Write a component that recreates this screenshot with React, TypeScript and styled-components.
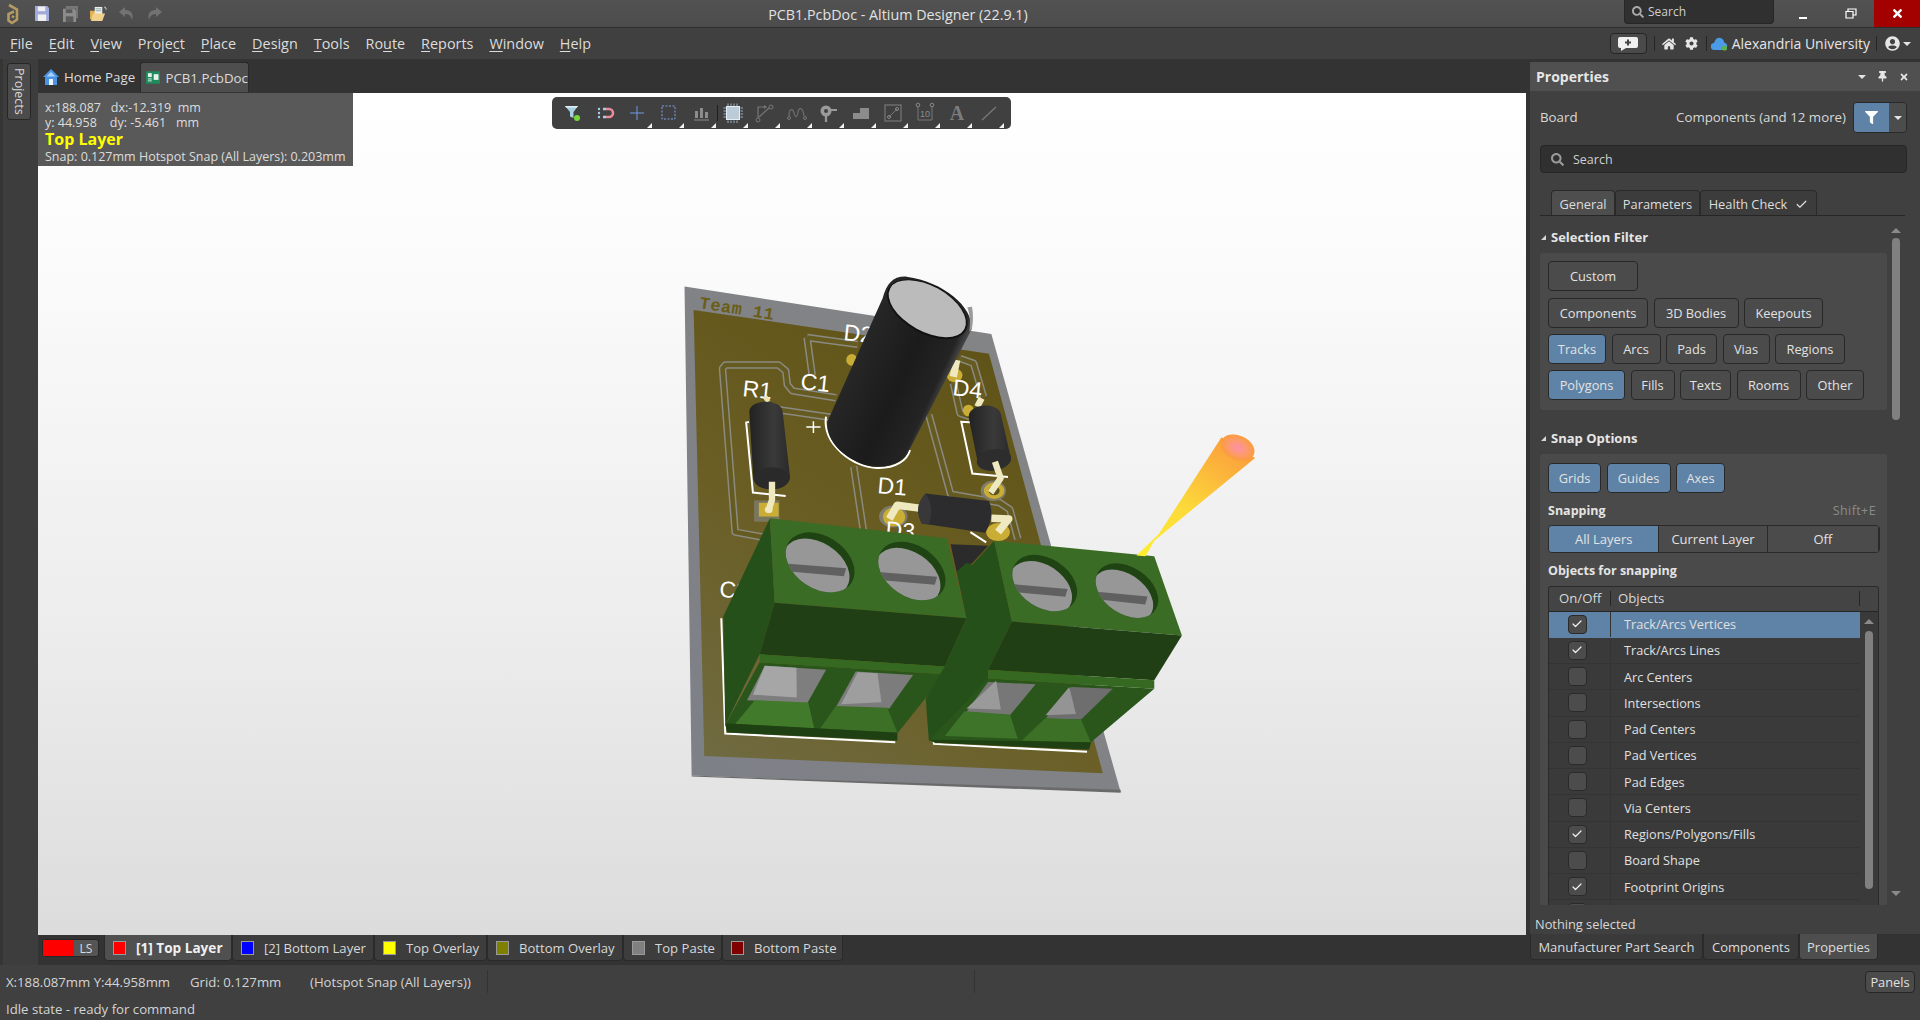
import React from "react";
import styled, { createGlobalStyle } from "styled-components";
import { FaCog, FaFilter, FaHome, FaSearch, FaThumbtack, FaTimes, FaUserCircle } from "react-icons/fa";
import { Check } from "lucide-react";

const Global = createGlobalStyle`
  html, body { margin: 0; padding: 0; background: #404040; overflow: hidden; }
  body { font-family: "Open Sans", "Noto Sans", "Liberation Sans", sans-serif; font-size: 12px; color: #d9d9d9; }
  * { box-sizing: border-box; }
`;

const Shell = styled.div`
  width: 1920px; height: 1020px; display: flex; flex-direction: column; overflow: hidden; background: #404040;
`;

/* ---------- title bar ---------- */
const TitleBar = styled.header`
  height: 28px; flex: none; display: flex; align-items: flex-start;
  background: linear-gradient(#525252, #4c4c4c); border-bottom: 1px solid #2e2e2e;
`;
const QuickTools = styled.div`
  width: 768px; height: 27px; flex: none; display: flex; align-items: center; padding-left: 6px;
`;
const LogoSlot = styled.span`
  width: 22px; display: flex; margin-right: 0;
`;
const QuickIcon = styled.span<{ $dim?: boolean }>`
  width: 28px; height: 20px; display: flex; align-items: center; justify-content: center; opacity: ${p => (p.$dim ? 0.75 : 1)};
`;
const WindowTitle = styled.div`
  width: 260px; height: 28px; line-height: 29px; font-size: 14.3px; text-align: center; color: #e2e2e2; white-space: nowrap;
`;
const TitleSearch = styled.div`
  width: 150px; height: 24px; margin-left: 596px; display: flex; align-items: center; gap: 4px; padding-left: 7px;
  background: #303030; border: 1px solid #262626; border-top: 0; border-radius: 0 0 4px 4px; color: #cfcfcf; font-size: 12px;
`;
const WinButton = styled.div<{ $close?: boolean; $w: number }>`
  width: ${p => p.$w}px; height: 27px; display: flex; align-items: center; justify-content: center;
  background: ${p => (p.$close ? "#a30000" : "transparent")}; color: #fff; flex: none;
`;
const WinSpacer = styled.div`
  width: 0; flex: 1;
`;

/* ---------- menu bar ---------- */
const MenuBar = styled.nav`
  height: 31px; flex: none; display: flex; align-items: center; background: #404040; padding-left: 10px; gap: 16px; font-size: 14.4px; color: #dcdcdc;
`;
const MenuItem = styled.span`
  white-space: nowrap; u { text-underline-offset: 2px; }
`;
const MenuRight = styled.div`
  margin-left: auto; display: flex; align-items: center; height: 100%; color: #e6e6e6;
`;
const ChatButton = styled.div`
  width: 37px; height: 21px; display: flex; align-items: center; justify-content: center; background: #4a4a4a; border: 1px solid #252525; border-radius: 4px;
`;
const MenuSep = styled.span<{ $ml: number; $mr: number }>`
  width: 1px; height: 15px; background: #262626; margin: 0 ${p => p.$mr}px 0 ${p => p.$ml}px;
`;
const MenuGap = styled.span<{ $w: number }>`
  width: ${p => p.$w}px; flex: none;
`;
const AccountName = styled.span`
  font-size: 14px; margin-left: 4px; white-space: nowrap;
`;
const Caret = styled.span`
  width: 0; height: 0; border-left: 4px solid transparent; border-right: 4px solid transparent; border-top: 4px solid #e4e4e4;
`;

/* ---------- main ---------- */
const Main = styled.div`
  flex: 1; display: flex; min-height: 0; background: #2f2f2f;
`;
const LeftStrip = styled.aside`
  width: 38px; flex: none; background: #3d3d3d; padding: 4px 0 0 7px; box-shadow: inset 3px 0 0 #353535;
`;
const ProjectsTab = styled.div`
  width: 24px; height: 57px; display: flex; align-items: center; justify-content: center; background: #4b4b4b; border: 1px solid #262626; border-radius: 3px;
  writing-mode: vertical-rl; font-size: 12.5px; color: #dadada;
`;
const Center = styled.section`
  width: 1488px; flex: none; display: flex; flex-direction: column;
`;
const DocTabs = styled.div`
  height: 34px; flex: none; background: #333; display: flex; align-items: flex-end; padding: 3px 0 1px 5px;
`;
const DocTab = styled.div<{ $active?: boolean; $w: number; $pl: number }>`
  width: ${p => p.$w}px; height: 30px; display: flex; align-items: center; gap: 5px; padding-left: ${p => p.$pl}px; font-size: 13.3px; color: #dcdcdc; white-space: nowrap;
  background: ${p => (p.$active ? "#4e4e4e" : "transparent")}; border-radius: 3px 3px 0 0;
  border: ${p => (p.$active ? "1px solid #2a2a2a" : "0")}; border-bottom: 0;
`;
const Canvas = styled.div`
  position: relative; height: 842px; flex: none; background: linear-gradient(#ffffff 0%, #fbfbfb 20%, #ececec 65%, #dcdcdc 100%); overflow: hidden;
`;
const CanvasDrawing = styled.svg`
  display: block; width: 100%; height: 100%;
`;
const Readout = styled.div`
  position: absolute; left: 0; top: 0; width: 315px; height: 73px; background: #595959; padding: 7px 0 0 7px; font-size: 12.5px; line-height: 15px; color: #dddddd; white-space: pre;
`;
const ReadoutLayer = styled.div`
  font-weight: 700; font-size: 16px; line-height: 19px; color: #ffff00;
`;
const FloatBar = styled.div`
  position: absolute; left: 514px; top: 4px; width: 459px; height: 32px; background: #404040; border-radius: 5px; display: flex; align-items: center; padding-left: 5px;
`;
const FloatTool = styled.div<{ $more?: boolean }>`
  position: relative; width: 32px; height: 32px; display: flex; align-items: center; justify-content: center; flex: none;
  ${p => p.$more && `&::after { content: ""; position: absolute; right: 1px; bottom: 1px; border-left: 5px solid transparent; border-bottom: 5px solid #f2f2f2; }`}
`;
const FloatSep = styled.div`
  width: 1px; height: 16px; background: #1f1f1f; flex: none; margin: 0 -1px 0 0;
`;
const LayerBar = styled.div`
  height: 30px; flex: none; background: #333; display: flex; align-items: flex-start; padding-left: 4px;
`;
const LockSwatch = styled.div`
  width: 57px; height: 18px; margin: 4px 5px 0 0; display: flex; border-radius: 3px; border: 1px solid #262626; overflow: hidden; background: #555; font-size: 12px; color: #ddd; line-height: 17px;
`;
const LockRed = styled.span`
  width: 31px; background: #ff0000;
`;
const LockText = styled.span`
  flex: 1; text-align: center;
`;
const LayerTab = styled.div<{ $w: number; $active?: boolean }>`
  width: ${p => p.$w}px; height: 26px; flex: none; display: flex; align-items: center; gap: 10px; padding-left: 8px; white-space: nowrap;
  background: ${p => (p.$active ? "#505050" : "#3d3d3d")}; border: 1px solid #2a2a2a; border-top: 0; border-radius: 0 0 4px 4px;
  font-size: ${p => (p.$active ? "13.6px" : "13.1px")}; font-weight: ${p => (p.$active ? 700 : 400)}; color: ${p => (p.$active ? "#f0f0f0" : "#d8d8d8")};
`;
const LayerChip = styled.span<{ $c: string }>`
  width: 13px; height: 14px; flex: none; background: ${p => p.$c}; border: 1px solid #9a9a9a;
`;

/* ---------- right dock ---------- */
const Dock = styled.aside`
  flex: 1; min-width: 0; display: flex; flex-direction: column; padding: 3px 0 0 4px; background: #333;
`;
const Panel = styled.div`
  height: 872px; flex: none; display: flex; flex-direction: column; background: #404040;
`;
const PanelHead = styled.div`
  height: 29px; flex: none; display: flex; align-items: center; padding: 0 11px 0 6px; gap: 11px; background: #505050; color: #e6e6e6;
`;
const PanelTitle = styled.div`
  flex: 1; font-weight: 700; font-size: 14px;
`;
const FilterRow = styled.div`
  height: 31px; flex: none; margin: 11px 13px 0 10px; display: flex; align-items: center; font-size: 13.3px; color: #d8d8d8;
`;
const FilterLabel = styled.span`
  position: relative; top: -1px;
`;
const Spread = styled.span`
  flex: 1;
`;
const FilterSummary = styled(FilterLabel)`
  margin-right: 7px;
`;
const FilterSplit = styled.div`
  width: 54px; height: 31px; display: flex; border: 1px solid #2a2a2a; border-radius: 4px; overflow: hidden;
`;
const FilterMain = styled.span`
  width: 35px; background: #5f83a6; display: flex; align-items: center; justify-content: center; color: #fff;
`;
const FilterDrop = styled.span`
  flex: 1; background: #4c4c4c; display: flex; align-items: center; justify-content: center;
`;
const SearchField = styled.div`
  height: 28px; flex: none; margin: 12px 13px 0 10px; display: flex; align-items: center; gap: 9px; padding-left: 10px; background: #303030; border: 1px solid #262626; border-radius: 4px; color: #cfcfcf; font-size: 12.5px;
`;
const TabRow = styled.div`
  height: 26px; flex: none; margin: 17px 15px 0 10px; padding-left: 11px; display: flex; border-bottom: 1px solid #262626;
`;
const PanelTab = styled.div<{ $w: number; $active?: boolean }>`
  width: ${p => p.$w}px; display: flex; align-items: center; justify-content: center; gap: 8px; padding-top: 2px; font-size: 12.8px; color: #dcdcdc; white-space: nowrap;
  background: ${p => (p.$active ? "#4e4e4e" : "#3c3c3c")}; border: 1px solid #2a2a2a; border-bottom: 0; border-radius: 4px 4px 0 0;
`;
const ScrollArea = styled.div`
  flex: 1; min-height: 0; display: flex; overflow: hidden;
`;
const ScrollContent = styled.div`
  width: 347px; margin-left: 10px; flex: none; overflow: hidden;
`;
const SectionTitle = styled.div<{ $mt: number }>`
  margin-top: ${p => p.$mt}px; margin-bottom: 5px; height: 22px; display: flex; align-items: center; gap: 5px; font-weight: 700; font-size: 13px; color: #e6e6e6;
`;
const Arrow = styled.span`
  width: 0; height: 0; margin-left: 1px; border-left: 5px solid transparent; border-bottom: 5px solid #d8d8d8;
`;
const SectionBody = styled.div<{ $pt: number; $pb?: number }>`
  background: #4a4a4a; border-radius: 3px; padding: ${p => p.$pt}px 0 ${p => p.$pb ?? 0}px 8px;
`;
const ChipRow = styled.div<{ $mt?: number }>`
  display: flex; gap: 5.5px; margin-top: ${p => p.$mt ?? 0}px;
`;
const Chip = styled.div<{ $w: number; $on?: boolean }>`
  width: ${p => p.$w}px; height: 30px; flex: none; display: flex; align-items: center; justify-content: center; border-radius: 4px; font-size: 12.8px; color: #e2e2e2;
  background: ${p => (p.$on ? "#5f83a6" : "#4b4b4b")}; border: 1px solid #282828;
`;
const LabelRow = styled.div<{ $mt: number }>`
  margin-top: ${p => p.$mt}px; height: 20px; display: flex; align-items: center; justify-content: space-between; padding-right: 11px; font-weight: 700; font-size: 12.5px; color: #e4e4e4;
`;
const Shortcut = styled.span`
  font-weight: 400; color: #8a8a8a; letter-spacing: .4px;
`;
const Segments = styled.div`
  width: 332px; height: 28px; margin-top: 5px; display: flex; border: 1px solid #2a2a2a; border-radius: 4px; overflow: hidden;
`;
const Segment = styled.div<{ $w: number; $on?: boolean }>`
  width: ${p => p.$w}px; display: flex; align-items: center; justify-content: center; font-size: 13px; color: #e2e2e2; border-right: 1px solid #2a2a2a;
  background: ${p => (p.$on ? "#5f83a6" : "#4b4b4b")};
`;
const SnapTable = styled.div`
  width: 331px; height: 320px; margin-top: 6px; background: #3a3a3a; border: 1px solid #2a2a2a; border-bottom: 0; border-radius: 3px 3px 0 0; overflow: hidden;
`;
const TableHead = styled.div`
  height: 24.5px; display: flex; align-items: center; background: #444; border-bottom: 1px solid #262626; font-size: 13.2px; color: #d8d8d8;
`;
const HeadCell = styled.div<{ $w: number; $pl: number }>`
  width: ${p => p.$w}px; height: 15px; line-height: 15px; padding-left: ${p => p.$pl}px; border-right: 1px solid #262626; white-space: nowrap;
`;
const TableBody = styled.div`
  display: flex;
`;
const RowList = styled.div`
  width: 311px; flex: none;
`;
const SnapRow = styled.div<{ $on?: boolean }>`
  height: 26.25px; display: flex; align-items: center; background: ${p => (p.$on ? "#5f83a6" : "#3a3a3a")}; border-bottom: 1px solid ${p => (p.$on ? "#5f83a6" : "#343434")}; font-size: 12.7px; color: #e0e0e0;
`;
const CheckCell = styled.div`
  width: 62px; height: 100%; flex: none; display: flex; align-items: center; justify-content: center; padding-right: 5px; border-right: 1px solid #333;
`;
const CheckBox = styled.div`
  width: 19px; height: 19px; display: flex; align-items: center; justify-content: center; background: #4c4c4c; border: 1px solid #2a2a2a; border-radius: 4px; color: #f0f0f0;
`;
const RowLabel = styled.div`
  padding-left: 13px; white-space: nowrap;
`;
const TableRail = styled.div`
  flex: 1; display: flex; flex-direction: column; align-items: center; padding-top: 7px;
`;
const ThinThumb = styled.div<{ $h: number; $w: number; $mt: number }>`
  width: ${p => p.$w}px; height: ${p => p.$h}px; margin-top: ${p => p.$mt}px; background: #808080; border-radius: 4px; flex: none;
`;
const RailUp = styled.div`
  width: 0; height: 0; border-left: 5px solid transparent; border-right: 5px solid transparent; border-bottom: 5px solid #8a8a8a; flex: none;
`;
const RailDown = styled(RailUp)`
  border-bottom: 0; border-top: 5px solid #8a8a8a;
`;
const OuterRail = styled.div`
  width: 18px; flex: none; display: flex; flex-direction: column; align-items: center; padding-top: 12px; height: 100%;
`;
const RailSpace = styled.div`
  flex: 1;
`;
const RailEnd = styled.div`
  height: 9px; flex: none;
`;
const PanelFoot = styled.div`
  height: 29px; flex: none; padding: 11px 0 0 5px; font-size: 12.8px; line-height: 17px; color: #d8d8d8;
`;
const DockTabs = styled.div`
  height: 26px; flex: none; display: flex;
`;
const DockTab = styled.div<{ $w: number; $active?: boolean }>`
  width: ${p => p.$w}px; display: flex; align-items: center; justify-content: center; padding-top: 1px; font-size: 13px; white-space: nowrap; color: #dcdcdc;
  background: ${p => (p.$active ? "#4e4e4e" : "#3a3a3a")}; border: 1px solid #2a2a2a; border-top: 0; border-radius: 0 0 4px 4px;
`;

/* ---------- status bar ---------- */
const StatusBar = styled.footer`
  height: 55px; flex: none; background: #404040; padding-left: 6px; display: flex; flex-direction: column; font-size: 13.2px; color: #d4d4d4;
`;
const StatusLine = styled.div<{ $h: number }>`
  height: ${p => p.$h}px; flex: none; display: flex; align-items: center; white-space: nowrap;
`;
const StatusCell = styled.span<{ $w: number }>`
  width: ${p => p.$w}px; flex: none;
`;
const StatusSep = styled.span<{ $ml?: number }>`
  width: 1px; height: 23px; background: #333; flex: none; margin-left: ${p => p.$ml ?? 0}px;
`;
const PanelsButton = styled.div`
  width: 50px; height: 22px; margin: 0 5px 0 auto; display: flex; align-items: center; justify-content: center; background: #4b4b4b; border: 1px solid #262626; border-radius: 4px; font-size: 12.8px; color: #e0e0e0;
`;

/* ---------- icons ---------- */
const Logo = () => (
  <svg width="14" height="22" viewBox="0 0 14 22"><path d="M3 2 L11 6.5 V16.5 L6 20 L2.5 17.5 V11 L8 8.5 M6 13 L8 14.5" fill="none" stroke="#b49b62" strokeWidth="2.6" /></svg>
);
const SaveIcon = ({ c = "#9fa9dc", w = "#f0f0f0" }: { c?: string; w?: string }) => (
  <svg width="14" height="15" viewBox="0 0 15 16"><path d="M0 0H13L15 2V16H0Z" fill={c} /><rect x="3" y="0.5" width="8" height="5" fill={w} /><rect x="3" y="9" width="9" height="7" fill={w} /></svg>
);
const SaveAllIcon = () => (
  <svg width="15" height="16" viewBox="0 0 16 17"><path d="M3 0H16V13H14V3H3Z" fill="#777" /><path d="M0 3H12L14 5V17H0Z" fill="#8c8c8c" /><rect x="3" y="3.5" width="7" height="4" fill="#5a5a5a" /><rect x="3" y="11" width="8" height="6" fill="#5a5a5a" /></svg>
);
const OpenIcon = () => (
  <svg width="17" height="16" viewBox="0 0 18 17"><path d="M0 5H5L7 3H9V14H0Z" fill="#e0b050" /><path d="M5 1H13V9H5Z" fill="#eee" /><path d="M6 3H12M6 5H12" stroke="#8aa" /><path d="M1 16L3 8H16L13 16Z" fill="#f1d08a" /><path d="M15 1l2 1v2" stroke="#cdd" fill="none" /></svg>
);
const UndoIcon = ({ flip }: { flip?: boolean }) => (
  <svg width="15" height="13" viewBox="0 0 15 13"><path d="M6 0L0 5L6 10V7C10 7 12 9 13 13C15 7 12 3 6 3Z" fill="#7e7e7e" transform={flip ? "matrix(-1 0 0 1 15 0)" : undefined} /></svg>
);
const ChatIcon = () => (
  <svg width="20" height="14" viewBox="0 0 20 14"><path d="M2 0H18Q20 0 20 2V9Q20 11 18 11H8L3 14V11H2Q0 11 0 9V2Q0 0 2 0Z" fill="#f0f0f0" /><path d="M10 2.5V8.5M7 5.5H13" stroke="#444" strokeWidth="2" /></svg>
);
const CloudIcon = () => (
  <svg width="17" height="14" viewBox="0 0 17 14"><path d="M3.5 13A3.5 3.5 0 0 1 3 6Q5 0 9.5 1Q13 2 13 5.5A3.8 3.8 0 0 1 13 13Z" fill="#4a9be8" /><circle cx="13.5" cy="11" r="2.6" fill="#5fb04f" /></svg>
);
const HomeTabIcon = () => (
  <svg width="16" height="16" viewBox="0 0 16 16"><path d="M8 0L16 8H14V16H2V8H0Z" fill="#4a94e6" /><path d="M6 16V10H10V16Z" fill="#eef5ff" /><path d="M8 3L12.5 7.5H3.5Z" fill="#a9d0f7" /></svg>
);
const PcbIcon = () => (
  <svg width="15" height="13" viewBox="0 0 15 13"><rect width="15" height="13" fill="#1f8a5c" /><rect x="2" y="2" width="4" height="4" fill="#e6f2ea" /><rect x="8" y="3" width="5" height="6" fill="#e6f2ea" /><path d="M2 8H6M2 10H6" stroke="#e6f2ea" /></svg>
);
const FunnelTool = () => (
  <svg width="22" height="22" viewBox="0 0 22 22"><path d="M3 4H16L11.5 10V16L8 14.5V10Z" fill="#a6d0df" /><path d="M3 4H16L15 5.5H4Z" fill="#dff0f6" /><circle cx="15" cy="16" r="3" fill="#77d63a" /></svg>
);
const MagnetTool = () => (
  <svg width="22" height="22" viewBox="0 0 22 22"><path d="M12 7H15A4 4 0 0 1 15 15H12" fill="none" stroke="#e88a98" strokeWidth="2.6" /><path d="M9 7H12M9 15H12" stroke="#a8cdea" strokeWidth="2.6" /><circle cx="5" cy="7" r="1.2" fill="#a8cdea" /><circle cx="5" cy="11" r="1.2" fill="#a8cdea" /><circle cx="5" cy="15" r="1.2" fill="#a8cdea" /></svg>
);
const CrossTool = () => (
  <svg width="22" height="22" viewBox="0 0 22 22"><path d="M11 4V18M4 11H18" stroke="#6f96e6" strokeWidth="1" /></svg>
);
const SelectTool = () => (
  <svg width="22" height="22" viewBox="0 0 22 22"><rect x="4" y="4" width="13" height="13" fill="none" stroke="#7d9fe6" strokeDasharray="2 1.5" strokeWidth="1" /></svg>
);
const AlignTool = () => (
  <svg width="22" height="22" viewBox="0 0 22 22"><path d="M5 9H8V16H5ZM10 6H13V16H10ZM15 10H18V16H15Z" fill="#8c8c8c" /><path d="M4 18H19" stroke="#8c8c8c" /></svg>
);
const ChipTool = () => (
  <svg width="22" height="22" viewBox="0 0 22 22"><rect x="4.5" y="4.5" width="13" height="13" fill="#bccbd8" stroke="#e6eef4" /><path d="M6 1.5V21M9 1.5V21M12 1.5V21M15 1.5V21M1.5 6H21M1.5 9H21M1.5 12H21M1.5 15H21" stroke="#9fb0bf" strokeDasharray="2.5 14.5" /></svg>
);
const RouteTool = () => (
  <svg width="22" height="22" viewBox="0 0 22 22"><path d="M4 16V5H11M5 15L15 6" fill="none" stroke="#777" strokeWidth="1.2" /><path d="M10 3L13 5L10 7" fill="#777" /><circle cx="4" cy="18" r="2" fill="none" stroke="#777" /><circle cx="17" cy="5" r="2" fill="none" stroke="#777" /></svg>
);
const WaveTool = () => (
  <svg width="22" height="22" viewBox="0 0 22 22"><path d="M3 14C3 6 7 6 8 11S11 16 12 10S17 6 18 14" fill="none" stroke="#6e6e6e" strokeWidth="1.2" /><circle cx="3" cy="16" r="1.5" fill="none" stroke="#777" /><circle cx="19" cy="16" r="1.5" fill="none" stroke="#777" /></svg>
);
const PadTool = () => (
  <svg width="22" height="22" viewBox="0 0 22 22"><circle cx="8" cy="9" r="5.5" fill="#9a9a9a" /><circle cx="8" cy="9" r="2" fill="#404040" /><path d="M13 8H19M8 14V20" stroke="#999" strokeWidth="2.2" /></svg>
);
const FillTool = () => (
  <svg width="22" height="22" viewBox="0 0 22 22"><path d="M3 17H19V6H10V11H3Z" fill="#8c8c8c" /></svg>
);
const BoxTool = () => (
  <svg width="22" height="22" viewBox="0 0 22 22"><rect x="3" y="3" width="16" height="16" fill="none" stroke="#777" strokeWidth="1.2" /><path d="M7 15L15 7" stroke="#777" /><circle cx="7" cy="15" r="1.5" fill="none" stroke="#888" /><circle cx="15" cy="7" r="1.5" fill="none" stroke="#888" /></svg>
);
const DimTool = () => (
  <svg width="22" height="22" viewBox="0 0 22 22"><path d="M4 5V18H18V5" fill="none" stroke="#777" /><circle cx="4" cy="3" r="1.8" fill="none" stroke="#888" /><circle cx="18" cy="3" r="1.8" fill="none" stroke="#888" /><text x="11" y="15" fontSize="9" fontFamily="Liberation Sans" textAnchor="middle" fill="#8c8c8c">10</text></svg>
);
const TextTool = () => (
  <svg width="22" height="22" viewBox="0 0 22 22"><text x="11" y="18" fontSize="20" fontWeight="700" fontFamily="Liberation Serif" textAnchor="middle" fill="#7c7c7c">A</text></svg>
);
const LineTool = () => (
  <svg width="22" height="22" viewBox="0 0 22 22"><path d="M4 18L18 5" stroke="#777" strokeWidth="1.4" /></svg>
);

/* ---------- 3D board: the inner groups use the crop scale of the model ---------- */
const Hole = ({ cx, cy, rx, ry, slotW }: { cx: number; cy: number; rx: number; ry: number; slotW: number }) => {
  const id = `hole${cx}`;
  return (
    <g>
      <clipPath id={id}>
        <ellipse cx={cx} cy={cy} rx={rx} ry={ry} transform={`rotate(45 ${cx} ${cy})`} />
      </clipPath>
      <ellipse cx={cx} cy={cy} rx={rx} ry={ry} transform={`rotate(45 ${cx} ${cy})`} fill="#1f4313" />
      <g clipPath={`url(#${id})`}>
        <ellipse cx={cx - 10} cy={cy + 15} rx={rx - 3} ry={ry - 3} transform={`rotate(45 ${cx - 10} ${cy + 15})`} fill="#979797" />
        <polygon points={`${cx - slotW - 14},${cy + 3} ${cx + slotW - 10},${cy + 17} ${cx + slotW - 16},${cy + 40} ${cx - slotW - 8},${cy + 26}`} fill="#606060" />
      </g>
    </g>
  );
};

const Board3D = () => (
  <CanvasDrawing viewBox="38 93 1488 842">
    <defs>
      <linearGradient id="mask" x1="0.7" y1="0" x2="0.1" y2="1">
        <stop offset="0" stopColor="#5e5216" />
        <stop offset="0.55" stopColor="#6a5e24" />
        <stop offset="1" stopColor="#6f6a40" />
      </linearGradient>
      <linearGradient id="edge" x1="1" y1="0" x2="0" y2="1">
        <stop offset="0" stopColor="#858585" />
        <stop offset="1" stopColor="#7d8087" />
      </linearGradient>
      <linearGradient id="capBody" gradientUnits="userSpaceOnUse" x1="430" y1="250" x2="760" y2="400">
        <stop offset="0" stopColor="#333" />
        <stop offset="0.2" stopColor="#262626" />
        <stop offset="0.6" stopColor="#1b1b1b" />
        <stop offset="0.88" stopColor="#242424" />
        <stop offset="0.96" stopColor="#4a4a4a" />
        <stop offset="1" stopColor="#777" />
      </linearGradient>
      <linearGradient id="resBody" x1="0" y1="0" x2="1" y2="0">
        <stop offset="0" stopColor="#222" />
        <stop offset="0.6" stopColor="#3a3a3a" />
        <stop offset="1" stopColor="#2a2a2a" />
      </linearGradient>
      <linearGradient id="cone" gradientUnits="userSpaceOnUse" x1="1210" y1="860" x2="1460" y2="530">
        <stop offset="0" stopColor="#ffef2e" />
        <stop offset="0.45" stopColor="#fcd93a" />
        <stop offset="1" stopColor="#fb9c3c" />
      </linearGradient>
      <radialGradient id="coneTip">
        <stop offset="0" stopColor="#ff8fa8" />
        <stop offset="0.55" stopColor="#fd9a70" />
        <stop offset="1" stopColor="#fb9c3c" />
      </radialGradient>
    </defs>

    <g transform="translate(660 260) scale(.3954 .3444)">
      <polygon points="62,77 838,215 1165,1545 80,1497" fill="url(#edge)" />
      <polygon points="80,1497 1165,1538 1165,1547 80,1500" fill="#6a6a6a" />
      <polygon points="85,145 832,272 1120,1490 112,1440" fill="url(#mask)" />
      <g fill="none" strokeLinejoin="round">
        {[
          "M445,400 L335,380 L322,362 L318,322 L300,305 L165,305 L158,315 L190,790 L275,808",
          "M300,435 L440,458",
          "M372,225 L385,335 M372,225 L500,245",
          "M490,600 L515,790",
          "M680,450 L735,680 L860,705 L885,725 L905,810",
          "M759,286 L793,300 L818,397",
          "M742,358 L759,445 L784,455",
        ].map(d => (
          <g key={d}>
            <path d={d} stroke="#8b8a80" strokeWidth="7.5" vectorEffect="non-scaling-stroke" />
            <path d={d} stroke="#655a20" strokeWidth="4.5" vectorEffect="non-scaling-stroke" />
          </g>
        ))}
      </g>
      <g fill="none" stroke="#fff">
        <path d="M225,470 L218,472 L235,675 L318,685" strokeWidth="2" vectorEffect="non-scaling-stroke" />
        <path d="M795,472 L762,470 L790,620 L880,630" strokeWidth="2" vectorEffect="non-scaling-stroke" />
        <path d="M155,1040 L165,1375 L595,1400" strokeWidth="2" vectorEffect="non-scaling-stroke" />
        <path d="M675,1275 L693,1405 L1080,1428" strokeWidth="2" vectorEffect="non-scaling-stroke" />
        <path d="M785,790 L825,820" strokeWidth="2" vectorEffect="non-scaling-stroke" />
        <path d="M370,485 H406 M388,468 V502" strokeWidth="1.5" vectorEffect="non-scaling-stroke" />
      </g>
      <g>
        <rect x="238" y="698" width="64" height="62" fill="#7b7660" />
        <rect x="250" y="705" width="50" height="40" fill="#c9ad35" />
        <circle cx="275" cy="725" r="10" fill="#e9e2b6" />
        <ellipse cx="590" cy="745" rx="36" ry="32" fill="#7f7c6c" />
        <ellipse cx="592" cy="746" rx="28" ry="27" fill="#c9ad35" />
        <ellipse cx="843" cy="670" rx="32" ry="30" fill="#7f7c6c" />
        <ellipse cx="845" cy="670" rx="26" ry="24" fill="#c9ad35" />
        <ellipse cx="845" cy="670" rx="14" ry="13" fill="#5c5420" />
        <ellipse cx="855" cy="790" rx="30" ry="26" fill="#c9ad35" />
        <ellipse cx="780" cy="437" rx="14" ry="17" fill="#c9ad35" />
        <ellipse cx="745" cy="335" rx="20" ry="20" fill="#c9ad35" />
        <ellipse cx="485" cy="290" rx="14" ry="17" fill="#c9ad35" />
      </g>
    </g>

    <g fill="#fff" fontFamily="Liberation Sans, sans-serif" fontSize="23">
      <text transform="translate(742 396) rotate(6)">R1</text>
      <text transform="translate(800 389) rotate(6)">C1</text>
      <text transform="translate(843 340) rotate(6)">D2</text>
      <text transform="translate(952 395) rotate(7)">D4</text>
      <text transform="translate(877 493) rotate(5)">D1</text>
      <text transform="translate(885 537) rotate(5)">D3</text>
      <text transform="translate(719 597) rotate(4)">C2</text>
    </g>
    <text transform="translate(699 308) rotate(9)" fontFamily="Liberation Mono, monospace" fontWeight="700" fontSize="17" fill="#6a5d14" letterSpacing="0.6">Team 11</text>

    <g transform="translate(690 270) scale(.3333)">
      <path d="M408,440 C396,525 495,594 560,594 C618,596 652,570 660,540" fill="none" stroke="#fff" strokeWidth="6" />
      <path d="M225,380 L235,395" stroke="#e9e2b6" strokeWidth="14" />
      <path d="M178,425 L190,625 C195,670 295,670 300,620 L278,425 C275,385 180,385 178,425Z" fill="url(#resBody)" />
      <ellipse cx="245" cy="625" rx="54" ry="33" fill="#2a2a2a" />
      <path d="M246,635 V690 L234,725" fill="none" stroke="#efe9bf" strokeWidth="19" strokeLinejoin="round" />
      <path d="M875,385 L862,410" stroke="#efe9bf" strokeWidth="19" />
      <path d="M800,270 L790,320" stroke="#efe9bf" strokeWidth="22" />
      <path d="M836,440 L862,570 C870,620 965,600 963,565 L932,430 C920,395 838,400 836,440Z" fill="url(#resBody)" />
      <ellipse cx="912" cy="570" rx="52" ry="32" transform="rotate(-10 912 570)" fill="#2d2d2d" />
      <path d="M915,575 L932,625 L902,668" fill="none" stroke="#efe9bf" strokeWidth="19" strokeLinejoin="round" />
      <path d="M578,85 L412,455 C405,530 500,590 560,590 C615,592 648,565 655,545 L845,178 C850,110 760,35 650,20 C610,18 590,40 578,85Z" fill="url(#capBody)" />
      <path d="M846,110 C850,130 850,160 845,178 L838,185 C842,160 840,130 832,112Z" fill="#9a9a9a" />
      <ellipse cx="712" cy="118" rx="132" ry="72" transform="rotate(29 712 118)" fill="#111" />
      <ellipse cx="712" cy="116" rx="127" ry="68" transform="rotate(29 712 116)" fill="#bbbbbb" />
    </g>

    <g transform="translate(660 260) scale(.3954 .3444)">
      <path d="M665,722 L600,712 L580,752" fill="none" stroke="#efe9bf" strokeWidth="7.5" vectorEffect="non-scaling-stroke" strokeLinejoin="round" />
      <path d="M838,750 L882,752 L855,790" fill="none" stroke="#efe9bf" strokeWidth="7.5" vectorEffect="non-scaling-stroke" strokeLinejoin="round" />
      <path d="M672,678 L832,700 Q848,745 822,792 L662,765 Q640,715 672,678Z" fill="#2c2c2f" />
      <path d="M672,678 Q695,720 680,768 L662,765 Q640,715 672,678Z" fill="#38383a" />

      <polygon points="735,825 830,830 790,880 750,905" fill="#2b2b2b" />

      <polygon points="278,750 290,995 252,1145 165,1350 160,1035" fill="#26501a" />
      <polygon points="278,750 725,808 775,1040 290,995" fill="#3a6c25" />
      <polygon points="290,995 775,1040 720,1180 252,1145" fill="#203f14" />
      <polygon points="252,1168 720,1203 600,1375 600,1395 170,1370 165,1350" fill="#2a561b" />
      <polygon points="220,1278 265,1178 420,1190 372,1288" fill="#7e7e7e" />
      <polygon points="235,1262 265,1178 345,1184 346,1270" fill="#a6a6a6" />
      <polygon points="445,1298 495,1195 640,1205 580,1302" fill="#7c7c7c" />
      <polygon points="458,1290 500,1197 550,1200 560,1284" fill="#9e9e9e" />
      <polygon points="190,1347 240,1278 375,1285 390,1360" fill="#427a2c" />
      <polygon points="405,1360 445,1295 575,1300 600,1372" fill="#3b7026" />
      <polygon points="165,1345 600,1373 600,1395 170,1372" fill="#1f4012" />
      <polygon points="252,1145 720,1180 720,1203 252,1168" fill="#356820" />
      <Hole cx={405} cy={878} rx={100} ry={72} slotW={76} />
      <Hole cx={637} cy={903} rx={98} ry={70} slotW={74} />

      <polygon points="845,815 890,1050 830,1190 830,1215 720,1385 680,1395 672,1275 720,1180 775,1040 750,905 775,880 790,885" fill="#26501a" />
      <polygon points="845,815 1250,860 1320,1090 890,1050" fill="#3a6c25" />
      <polygon points="890,1050 1320,1090 1250,1220 830,1190" fill="#203f14" />
      <polygon points="830,1215 1250,1245 1090,1400 1085,1420 695,1400 680,1395" fill="#2a561b" />
      <polygon points="775,1312 830,1225 950,1232 885,1322" fill="#777" />
      <polygon points="775,1302 850,1222 862,1305" fill="#9a9a9a" />
      <polygon points="975,1332 1040,1240 1145,1245 1065,1334" fill="#6e6e6e" />
      <polygon points="975,1322 1035,1240 1052,1318" fill="#949494" />
      <polygon points="720,1382 770,1310 885,1320 905,1390" fill="#3d7429" />
      <polygon points="915,1395 975,1330 1065,1335 1090,1402" fill="#3b7026" />
      <polygon points="682,1393 1090,1400 1085,1422 695,1402" fill="#1f4012" />
      <polygon points="830,1190 1250,1220 1250,1245 830,1215" fill="#356820" />
      <Hole cx={973} cy={938} rx={94} ry={68} slotW={68} />
      <Hole cx={1181} cy={960} rx={92} ry={64} slotW={62} />

      <polygon points="1205,858 1262,795 1420,515 1505,575 1250,815 1228,860" fill="url(#cone)" />
      <ellipse cx="1461" cy="545" rx="46" ry="34" transform="rotate(35 1461 545)" fill="url(#coneTip)" />
    </g>
  </CanvasDrawing>
);

/* ---------- data ---------- */
const menus: [string, string, string][] = [
  ["", "F", "ile"], ["", "E", "dit"], ["", "V", "iew"], ["Proje", "c", "t"], ["", "P", "lace"], ["", "D", "esign"],
  ["", "T", "ools"], ["Ro", "u", "te"], ["", "R", "eports"], ["", "W", "indow"], ["", "H", "elp"],
];
const layers = [
  { n: "[1] Top Layer", c: "#ff0000", w: 128, active: true },
  { n: "[2] Bottom Layer", c: "#0000ff", w: 142 },
  { n: "Top Overlay", c: "#ffff00", w: 113 },
  { n: "Bottom Overlay", c: "#808000", w: 136 },
  { n: "Top Paste", c: "#808080", w: 99 },
  { n: "Bottom Paste", c: "#800000", w: 121 },
];
const chipRows: { n: string; w: number; on?: boolean }[][] = [
  [{ n: "Custom", w: 90 }],
  [{ n: "Components", w: 100 }, { n: "3D Bodies", w: 85 }, { n: "Keepouts", w: 79 }],
  [{ n: "Tracks", w: 58, on: true }, { n: "Arcs", w: 49 }, { n: "Pads", w: 51 }, { n: "Vias", w: 47 }, { n: "Regions", w: 70 }],
  [{ n: "Polygons", w: 77, on: true }, { n: "Fills", w: 44 }, { n: "Texts", w: 51 }, { n: "Rooms", w: 64 }, { n: "Other", w: 58 }],
];
const chipGaps = [0, 7, 6, 6];
const snapRows: [string, boolean][] = [
  ["Track/Arcs Vertices", true], ["Track/Arcs Lines", true], ["Arc Centers", false], ["Intersections", false],
  ["Pad Centers", false], ["Pad Vertices", false], ["Pad Edges", false], ["Via Centers", false],
  ["Regions/Polygons/Fills", true], ["Board Shape", false], ["Footprint Origins", true], ["", false],
];

export default function App() {
  return (
    <Shell>
      <Global />
      <TitleBar>
        <QuickTools>
          <LogoSlot><Logo /></LogoSlot>
          <QuickIcon><SaveIcon /></QuickIcon>
          <QuickIcon><SaveAllIcon /></QuickIcon>
          <QuickIcon><OpenIcon /></QuickIcon>
          <QuickIcon $dim><UndoIcon /></QuickIcon>
          <QuickIcon $dim><UndoIcon flip /></QuickIcon>
        </QuickTools>
        <WindowTitle>PCB1.PcbDoc - Altium Designer (22.9.1)</WindowTitle>
        <TitleSearch><FaSearch size={12} color="#a8a8a8" />Search</TitleSearch>
        <WinSpacer />
        <WinButton $w={50}><svg width="9" height="10" viewBox="0 0 9 10"><path d="M0 9H8" stroke="#fff" strokeWidth="2" /></svg></WinButton>
        <WinButton $w={46}><svg width="12" height="11" viewBox="0 0 12 11"><path d="M3 3V1H11V7H8M1 3.5H8V10H1Z" fill="none" stroke="#fff" strokeWidth="1.2" /></svg></WinButton>
        <WinButton $w={46} $close><FaTimes size={13} /></WinButton>
      </TitleBar>

      <MenuBar>
        {menus.map(([a, u, b]) => (
          <MenuItem key={a + u + b}>{a}<u>{u}</u>{b}</MenuItem>
        ))}
        <MenuRight>
          <ChatButton><ChatIcon /></ChatButton>
          <MenuSep $ml={7} $mr={7} />
          <FaHome size={14} />
          <MenuGap $w={9} />
          <FaCog size={13} />
          <MenuSep $ml={8} $mr={4} />
          <CloudIcon />
          <AccountName>Alexandria University</AccountName>
          <MenuSep $ml={6} $mr={8} />
          <FaUserCircle size={15} />
          <MenuGap $w={3} />
          <Caret />
          <MenuGap $w={9} />
        </MenuRight>
      </MenuBar>

      <Main>
        <LeftStrip><ProjectsTab>Projects</ProjectsTab></LeftStrip>
        <Center>
          <DocTabs>
            <DocTab $w={97} $pl={0}><HomeTabIcon />Home Page</DocTab>
            <DocTab $w={109} $pl={5} $active><PcbIcon />PCB1.PcbDoc</DocTab>
          </DocTabs>
          <Canvas>
            <Board3D />
            <Readout>
              {"x:188.087   dx:-12.319  mm\ny: 44.958    dy: -5.461   mm"}
              <ReadoutLayer>Top Layer</ReadoutLayer>
              {"Snap: 0.127mm Hotspot Snap (All Layers): 0.203mm"}
            </Readout>
            <FloatBar>
              <FloatTool><FunnelTool /></FloatTool>
              <FloatTool><MagnetTool /></FloatTool>
              <FloatTool $more><CrossTool /></FloatTool>
              <FloatTool $more><SelectTool /></FloatTool>
              <FloatTool $more><AlignTool /></FloatTool>
              <FloatSep />
              <FloatTool $more><ChipTool /></FloatTool>
              <FloatTool $more><RouteTool /></FloatTool>
              <FloatTool $more><WaveTool /></FloatTool>
              <FloatTool $more><PadTool /></FloatTool>
              <FloatTool $more><FillTool /></FloatTool>
              <FloatTool $more><BoxTool /></FloatTool>
              <FloatTool $more><DimTool /></FloatTool>
              <FloatTool $more><TextTool /></FloatTool>
              <FloatTool $more><LineTool /></FloatTool>
            </FloatBar>
          </Canvas>
          <LayerBar>
            <LockSwatch><LockRed /><LockText>LS</LockText></LockSwatch>
            {layers.map(l => (
              <LayerTab key={l.n} $w={l.w} $active={l.active}><LayerChip $c={l.c} />{l.n}</LayerTab>
            ))}
          </LayerBar>
        </Center>

        <Dock>
          <Panel>
            <PanelHead>
              <PanelTitle>Properties</PanelTitle>
              <Caret />
              <FaThumbtack size={11} />
              <FaTimes size={10} />
            </PanelHead>
            <FilterRow>
              <FilterLabel>Board</FilterLabel><Spread />
              <FilterSummary>Components (and 12 more)</FilterSummary>
              <FilterSplit>
                <FilterMain><FaFilter size={13} /></FilterMain>
                <FilterDrop><Caret /></FilterDrop>
              </FilterSplit>
            </FilterRow>
            <SearchField><FaSearch size={13} color="#9a9a9a" />Search</SearchField>
            <TabRow>
              <PanelTab $w={64} $active>General</PanelTab>
              <PanelTab $w={85}>Parameters</PanelTab>
              <PanelTab $w={117}>Health Check<Check size={13} strokeWidth={2.2} /></PanelTab>
            </TabRow>
            <ScrollArea>
              <ScrollContent>
                <SectionTitle $mt={10}><Arrow />Selection Filter</SectionTitle>
                <SectionBody $pt={8} $pb={10}>
                  {chipRows.map((row, i) => (
                    <ChipRow key={row[0].n} $mt={chipGaps[i]}>
                      {row.map(c => <Chip key={c.n} $w={c.w} $on={c.on}>{c.n}</Chip>)}
                    </ChipRow>
                  ))}
                </SectionBody>
                <SectionTitle $mt={17}><Arrow />Snap Options</SectionTitle>
                <SectionBody $pt={9}>
                  <ChipRow>
                    <Chip $w={53} $on>Grids</Chip>
                    <Chip $w={64} $on>Guides</Chip>
                    <Chip $w={49} $on>Axes</Chip>
                  </ChipRow>
                  <LabelRow $mt={7}>Snapping<Shortcut>Shift+E</Shortcut></LabelRow>
                  <Segments>
                    <Segment $w={111} $on>All Layers</Segment>
                    <Segment $w={109}>Current Layer</Segment>
                    <Segment $w={112}>Off</Segment>
                  </Segments>
                  <LabelRow $mt={7}>Objects for snapping</LabelRow>
                  <SnapTable>
                    <TableHead>
                      <HeadCell $w={62} $pl={10}>On/Off</HeadCell>
                      <HeadCell $w={249} $pl={7}>Objects</HeadCell>
                    </TableHead>
                    <TableBody>
                      <RowList>
                        {snapRows.map(([n, on], i) => (
                          <SnapRow key={n + i} $on={i === 0}>
                            <CheckCell><CheckBox>{on && <Check size={12} strokeWidth={2.4} />}</CheckBox></CheckCell>
                            <RowLabel>{n}</RowLabel>
                          </SnapRow>
                        ))}
                      </RowList>
                      <TableRail>
                        <RailUp />
                        <ThinThumb $w={8} $h={258} $mt={7} />
                      </TableRail>
                    </TableBody>
                  </SnapTable>
                </SectionBody>
              </ScrollContent>
              <OuterRail>
                <RailUp />
                <ThinThumb $w={8} $h={182} $mt={5} />
                <RailSpace />
                <RailDown />
                <RailEnd />
              </OuterRail>
            </ScrollArea>
            <PanelFoot>Nothing selected</PanelFoot>
          </Panel>
          <DockTabs>
            <DockTab $w={173}>Manufacturer Part Search</DockTab>
            <DockTab $w={96}>Components</DockTab>
            <DockTab $w={79} $active>Properties</DockTab>
          </DockTabs>
        </Dock>
      </Main>

      <StatusBar>
        <StatusLine $h={33}>
          <StatusCell $w={184}>X:188.087mm Y:44.958mm</StatusCell>
          <StatusCell $w={120}>Grid: 0.127mm</StatusCell>
          <StatusCell $w={170}>(Hotspot Snap (All Layers))</StatusCell>
          <StatusSep $ml={7} />
          <StatusSep $ml={486} />
          <PanelsButton>Panels</PanelsButton>
        </StatusLine>
        <StatusLine $h={22}>Idle state - ready for command</StatusLine>
      </StatusBar>
    </Shell>
  );
}
